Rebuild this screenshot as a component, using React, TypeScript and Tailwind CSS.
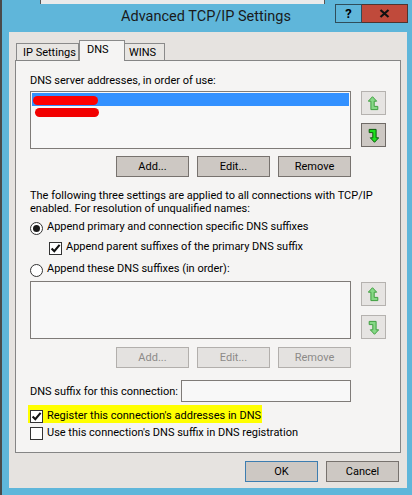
import React from "react";

function Check({ checked }: { checked: boolean }) {
  return (
    <div className="w-[13px] h-[13px] border border-[#333333] bg-white flex items-center justify-center shrink-0">
      {checked && (
        <svg width="11" height="11" viewBox="0 0 11 11">
          <path d="M1.6 5.4 L4.3 8.2 L9.6 1.8" fill="none" stroke="#111111" strokeWidth="2.1" />
        </svg>
      )}
    </div>
  );
}

function Radio({ on }: { on: boolean }) {
  return (
    <div className="w-[13px] h-[13px] rounded-full border border-[#333333] bg-white flex items-center justify-center shrink-0">
      {on && <div className="w-[7px] h-[7px] rounded-full bg-[#1a1a1a]" />}
    </div>
  );
}

function ArrowIcon({ down, enabled }: { down?: boolean; enabled?: boolean }) {
  const fill = enabled ? "#1fe01f" : "#86d886";
  const stroke = enabled ? "#0a5a0a" : "#3f9f3f";
  return (
    <svg width="11" height="15" viewBox="0 0 11 15" className={down ? "rotate-180" : ""}>
      <path
        d="M4.5 0.7 L8.7 5.2 L6.2 5.2 L6.2 10.4 L9.8 10.4 L9.8 13.6 L2.9 13.6 L2.9 5.2 L0.3 5.2 Z"
        fill={fill}
        stroke={stroke}
        strokeWidth="1"
        strokeLinejoin="miter"
      />
    </svg>
  );
}

function ArrowBtn({ down, enabled }: { down?: boolean; enabled?: boolean }) {
  return (
    <div
      className={
        "w-[25px] h-[24px] border flex items-center justify-center " +
        (enabled ? "bg-[#cdc8c3] border-[#6f6a66]" : "bg-[#e6e4e2] border-[#b5b2af]")
      }
    >
      <ArrowIcon down={down} enabled={enabled} />
    </div>
  );
}

function Btn({
  children,
  disabled,
  primary,
}: {
  children: React.ReactNode;
  disabled?: boolean;
  primary?: boolean;
}) {
  let cls = "w-[73px] h-[21px] border flex items-center justify-center ";
  if (disabled) cls += "bg-[#e4e2e0] border-[#b2afac] text-[#8c8a88]";
  else if (primary) cls += "bg-[#cdc8c3] border-[#3d7db0] text-black";
  else cls += "bg-[#cdc8c3] border-[#77726e] text-black";
  return <div className={cls}>{children}</div>;
}

export default function App() {
  return (
    <div className="w-[412px] h-[495px] bg-[#5fb6da] border-l-2 border-[#4a4a4a] flex flex-col overflow-hidden [font-family:Roboto,sans-serif] text-[11px] leading-[15px] text-black">
      {/* strip of the window behind */}
      <div className="h-[4px] flex shrink-0">
        <div className="w-[38px]" />
        <div className="w-[285px] bg-[#eaeaea] border-x border-[#555555]" />
        <div className="flex-1" />
      </div>

      {/* title bar */}
      <div className="h-[28px] flex shrink-0">
        <div className="w-[75px]" />
        <div className="flex-1 text-center text-[14.5px] leading-[20px] pt-[3px] text-[#1a1a1a]">
          Advanced TCP/IP Settings
        </div>
        <div className="flex pr-[4px] h-[19px]">
          <div className="w-[27px] h-[19px] border border-[#2f4d5a] flex items-center justify-center font-bold text-[13px] leading-none text-black">
            ?
          </div>
          <div className="w-[46px] h-[19px] bg-[#c04a3b] border border-[#4e3530] border-l-0 flex items-center justify-center">
            <svg width="11" height="9" viewBox="0 0 11 9">
              <path d="M1.5 1 L9.5 8 M9.5 1 L1.5 8" stroke="#111111" strokeWidth="2.2" />
            </svg>
          </div>
        </div>
      </div>

      {/* client area */}
      <div className="h-[456px] ml-[7px] mr-[5px] bg-[#e6e3e0] flex flex-col px-[6px] pt-[8px] shrink-0">
        {/* tabs */}
        <div className="flex items-end h-[21px] -mb-px relative z-10 pl-px">
          <div className="w-[63px] h-[17px] mb-px border border-b-0 border-[#8a8a8a] bg-[#e8e6e3] pl-[6px] pt-[1px]">
            IP Settings
          </div>
          <div className="w-[46px] h-[21px] border border-b-0 border-[#8a8a8a] bg-[#f5f4f3] pl-[7px] pt-[1px]">
            DNS
          </div>
          <div className="w-[40px] h-[17px] mb-px border border-b-0 border-l-0 border-[#8a8a8a] bg-[#e8e6e3] pl-[4px] pt-[1px]">
            WINS
          </div>
        </div>

        {/* panel */}
        <div className="h-[393px] border border-[#858585] bg-[#f5f4f3] pl-[14px] flex flex-col">
          <div className="mt-[12px]">DNS server addresses, in order of use:</div>

          <div className="flex mt-[3px]">
            <div className="w-[321px] h-[58px] border border-[#7f7b78] bg-[#f8f8f8] p-px flex flex-col">
              <div className="h-[13px] bg-[#3391ff] flex items-start">
                <div className="ml-px mt-[3px] w-[65px] h-[9px] rounded-full bg-[#ff0000]" />
              </div>
              <div className="ml-[3px] mt-[2px] w-[64px] h-[9px] rounded-full bg-[#f20000]" />
            </div>
            <div className="ml-[10px] flex flex-col">
              <ArrowBtn />
              <div className="mt-[8px]">
                <ArrowBtn down enabled />
              </div>
            </div>
          </div>

          <div className="w-[321px] flex justify-end gap-[8px] mt-[7px]">
            <Btn>Add...</Btn>
            <Btn>Edit...</Btn>
            <Btn>Remove</Btn>
          </div>

          <div className="mt-[12px] leading-[13px]">
            The following three settings are applied to all connections with TCP/IP
            <br />
            enabled. For resolution of unqualified names:
          </div>

          <div className="flex items-start mt-[4px]">
            <div className="mt-[3px]">
              <Radio on />
            </div>
            <div className="ml-[4px]">Append primary and connection specific DNS suffixes</div>
          </div>

          <div className="flex items-start mt-[4px] ml-[19px]">
            <div className="mt-[3px]">
              <Check checked />
            </div>
            <div className="ml-[4px]">Append parent suffixes of the primary DNS suffix</div>
          </div>

          <div className="flex items-start mt-[6px]">
            <div className="mt-[3px]">
              <Radio on={false} />
            </div>
            <div className="ml-[4px]">Append these DNS suffixes (in order):</div>
          </div>

          <div className="flex mt-[4px]">
            <div className="w-[321px] h-[58px] border border-[#7f7b78] bg-[#f8f8f8]" />
            <div className="ml-[10px] flex flex-col pt-px">
              <ArrowBtn />
              <div className="mt-[9px]">
                <ArrowBtn down />
              </div>
            </div>
          </div>

          <div className="w-[321px] flex justify-end gap-[8px] mt-[8px]">
            <Btn disabled>Add...</Btn>
            <Btn disabled>Edit...</Btn>
            <Btn disabled>Remove</Btn>
          </div>

          <div className="flex items-center mt-[12px]">
            <div className="w-[151px]">DNS suffix for this connection:</div>
            <div className="w-[170px] h-[22px] border border-[#7f7b78] bg-[#f8f8f8]" />
          </div>

          <div className="self-start flex items-start -ml-[2px] mt-[3px] h-[18px] bg-[#ffff00] pl-[2px] pr-px pt-[3px]">
            <div className="mt-[2px]">
              <Check checked />
            </div>
            <div className="ml-[4px]">Register this connection's addresses in DNS</div>
          </div>

          <div className="flex items-start mt-[2px]">
            <div className="mt-[2px]">
              <Check checked={false} />
            </div>
            <div className="ml-[4px]">Use this connection's DNS suffix in DNS registration</div>
          </div>
        </div>

        {/* dialog buttons */}
        <div className="flex justify-end gap-[8px] mt-[8px] pr-[2px]">
          <Btn primary>OK</Btn>
          <Btn>Cancel</Btn>
        </div>
      </div>
    </div>
  );
}
